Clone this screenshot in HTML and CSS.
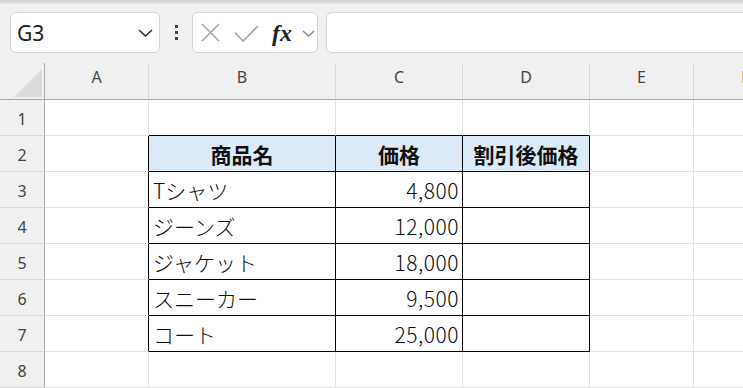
FILE: index.html
```html
<!DOCTYPE html>
<html lang="ja">
<head>
<meta charset="utf-8">
<title>Sheet</title>
<link rel="stylesheet" href="styles.css">
</head>
<body>
<div class="app">
  <div class="topband"></div>
  <div class="toolbar">
    <div class="namebox">
      <span class="ref">G3</span>
      <svg class="chev" width="15" height="8" viewBox="0 0 15 8"><path d="M1 1 L7.5 7 L14 1" fill="none" stroke="#333" stroke-width="1.6"/></svg>
    </div>
    <div class="dots"><i></i><i></i><i></i></div>
    <div class="fxbox">
      <svg class="ic-x" width="19" height="19" viewBox="0 0 19 19"><path d="M1 1 L18 18 M18 1 L1 18" stroke="#a6a6a6" stroke-width="1.6" fill="none"/></svg>
      <svg class="ic-ok" width="25" height="17" viewBox="0 0 25 17"><path d="M1 7.5 L9 16 L24 1" stroke="#a6a6a6" stroke-width="1.6" fill="none"/></svg>
      <span class="fx">fx</span>
      <svg class="ic-dd" width="13" height="7" viewBox="0 0 13 7"><path d="M1 1 L6.5 6 L12 1" stroke="#8a8a8a" stroke-width="1.4" fill="none"/></svg>
    </div>
    <div class="formula"></div>
  </div>
  <div class="sheet">
    <div class="ch corner"><div class="tri"></div></div>
    <div class="ch">A</div>
    <div class="ch">B</div>
    <div class="ch">C</div>
    <div class="ch">D</div>
    <div class="ch">E</div>
    <div class="ch">F</div>

    <div class="rh">1</div>
    <div class="c"></div>
    <div class="c tb"></div>
    <div class="c tb"></div>
    <div class="c tb"></div>
    <div class="c"></div>
    <div class="c"></div>

    <div class="rh">2</div>
    <div class="c tr"></div>
    <div class="c t hd">商品名</div>
    <div class="c t hd">価格</div>
    <div class="c t hd">割引後価格</div>
    <div class="c"></div>
    <div class="c"></div>

    <div class="rh">3</div>
    <div class="c tr"></div>
    <div class="c t txt">Tシャツ</div>
    <div class="c t num">4,800</div>
    <div class="c t"></div>
    <div class="c"></div>
    <div class="c"></div>

    <div class="rh">4</div>
    <div class="c tr"></div>
    <div class="c t txt">ジーンズ</div>
    <div class="c t num">12,000</div>
    <div class="c t"></div>
    <div class="c"></div>
    <div class="c"></div>

    <div class="rh">5</div>
    <div class="c tr"></div>
    <div class="c t txt">ジャケット</div>
    <div class="c t num">18,000</div>
    <div class="c t"></div>
    <div class="c"></div>
    <div class="c"></div>

    <div class="rh">6</div>
    <div class="c tr"></div>
    <div class="c t txt">スニーカー</div>
    <div class="c t num">9,500</div>
    <div class="c t"></div>
    <div class="c"></div>
    <div class="c"></div>

    <div class="rh">7</div>
    <div class="c tr"></div>
    <div class="c t txt">コート</div>
    <div class="c t num">25,000</div>
    <div class="c t"></div>
    <div class="c"></div>
    <div class="c"></div>

    <div class="rh">8</div>
    <div class="c"></div>
    <div class="c"></div>
    <div class="c"></div>
    <div class="c"></div>
    <div class="c"></div>
    <div class="c"></div>
  </div>
</div>
</body>
</html>
```
FILE: styles.css
```css
* { box-sizing: border-box; }
html, body { margin: 0; padding: 0; background: #ffffff; }
.app {
  width: 743px;
  height: 388px;
  overflow: hidden;
  font-family: "Noto Sans", "Noto Sans CJK JP", sans-serif;
  background: #f0f0f0;
}
.topband {
  height: 4px;
  background: linear-gradient(#cfcfcf, #e6e6e6);
}
.toolbar {
  height: 59px;
  display: flex;
  align-items: flex-start;
  padding-top: 8px;
  padding-left: 10px;
}
.namebox {
  width: 150px;
  height: 41px;
  background: #fff;
  border: 1px solid #d6d6d6;
  border-radius: 6px;
  display: flex;
  align-items: center;
  padding-left: 6px;
  padding-right: 6px;
}
.ref {
  font-size: 21px;
  color: #222;
  flex: 1;
  line-height: 1;
  padding-top: 2px;
}
.chev { margin-top: 1px; }
.dots {
  width: 32px;
  height: 41px;
  display: flex;
  flex-direction: column;
  align-items: center;
  justify-content: center;
  gap: 3px;
}
.dots i {
  display: block;
  width: 3px;
  height: 3px;
  background: #444;
}
.fxbox {
  width: 126px;
  height: 41px;
  background: #fff;
  border: 1px solid #d6d6d6;
  border-radius: 6px;
  display: flex;
  align-items: center;
  padding-left: 8px;
}
.ic-x { margin-right: 14px; }
.ic-ok { margin-right: 13px; margin-top: 2px; }
.fx {
  font-family: "Liberation Serif", serif;
  font-style: italic;
  font-weight: bold;
  font-size: 24px;
  color: #222;
  line-height: 1;
  width: 22px;
  margin-right: 8px;
}
.ic-dd { margin-top: 2px; }
.formula {
  flex: 1;
  height: 41px;
  margin-left: 8px;
  margin-right: -10px;
  background: #fff;
  border: 1px solid #d6d6d6;
  border-radius: 6px;
}
.sheet {
  display: grid;
  grid-template-columns: 45px 104px 187px 127px 127px 104px 104px;
  grid-template-rows: 37px repeat(8, 36px);
  background: #fff;
}
.ch {
  background: #f0f0f0;
  border-right: 1px solid #dadada;
  border-bottom: 1px solid #ababab;
  display: flex;
  align-items: center;
  justify-content: center;
  padding-bottom: 8px;
  font-size: 16px;
  color: #444;
}
.corner {
  border-right: 1px solid #ababab;
  align-items: flex-end;
  justify-content: flex-end;
  padding: 0 2px 2px 0;
}
.tri {
  width: 28px;
  height: 28px;
  background: #dcdcdc;
  clip-path: polygon(100% 0, 100% 100%, 0 100%);
}
.rh {
  background: #f0f0f0;
  border-right: 1px solid #ababab;
  border-bottom: 1px solid #dadada;
  display: flex;
  align-items: center;
  justify-content: center;
  padding-top: 3px;
  font-size: 16px;
  color: #444;
}
.c {
  border-right: 1px solid #e1e1e1;
  border-bottom: 1px solid #e1e1e1;
  display: flex;
  align-items: center;
  font-family: "Noto Sans CJK JP", sans-serif;
  font-weight: 300;
  font-size: 21px;
  color: #111;
  white-space: nowrap;
}
.tb { border-bottom-color: #000; }
.tr { border-right-color: #000; }
.t {
  border-right-color: #000;
  border-bottom-color: #000;
}
.hd {
  background: #dce9f7;
  font-weight: bold;
  justify-content: center;
}
.txt { padding-left: 4px; }
.num {
  justify-content: flex-end;
  padding-right: 3px;
  letter-spacing: 0.5px;
}
```
